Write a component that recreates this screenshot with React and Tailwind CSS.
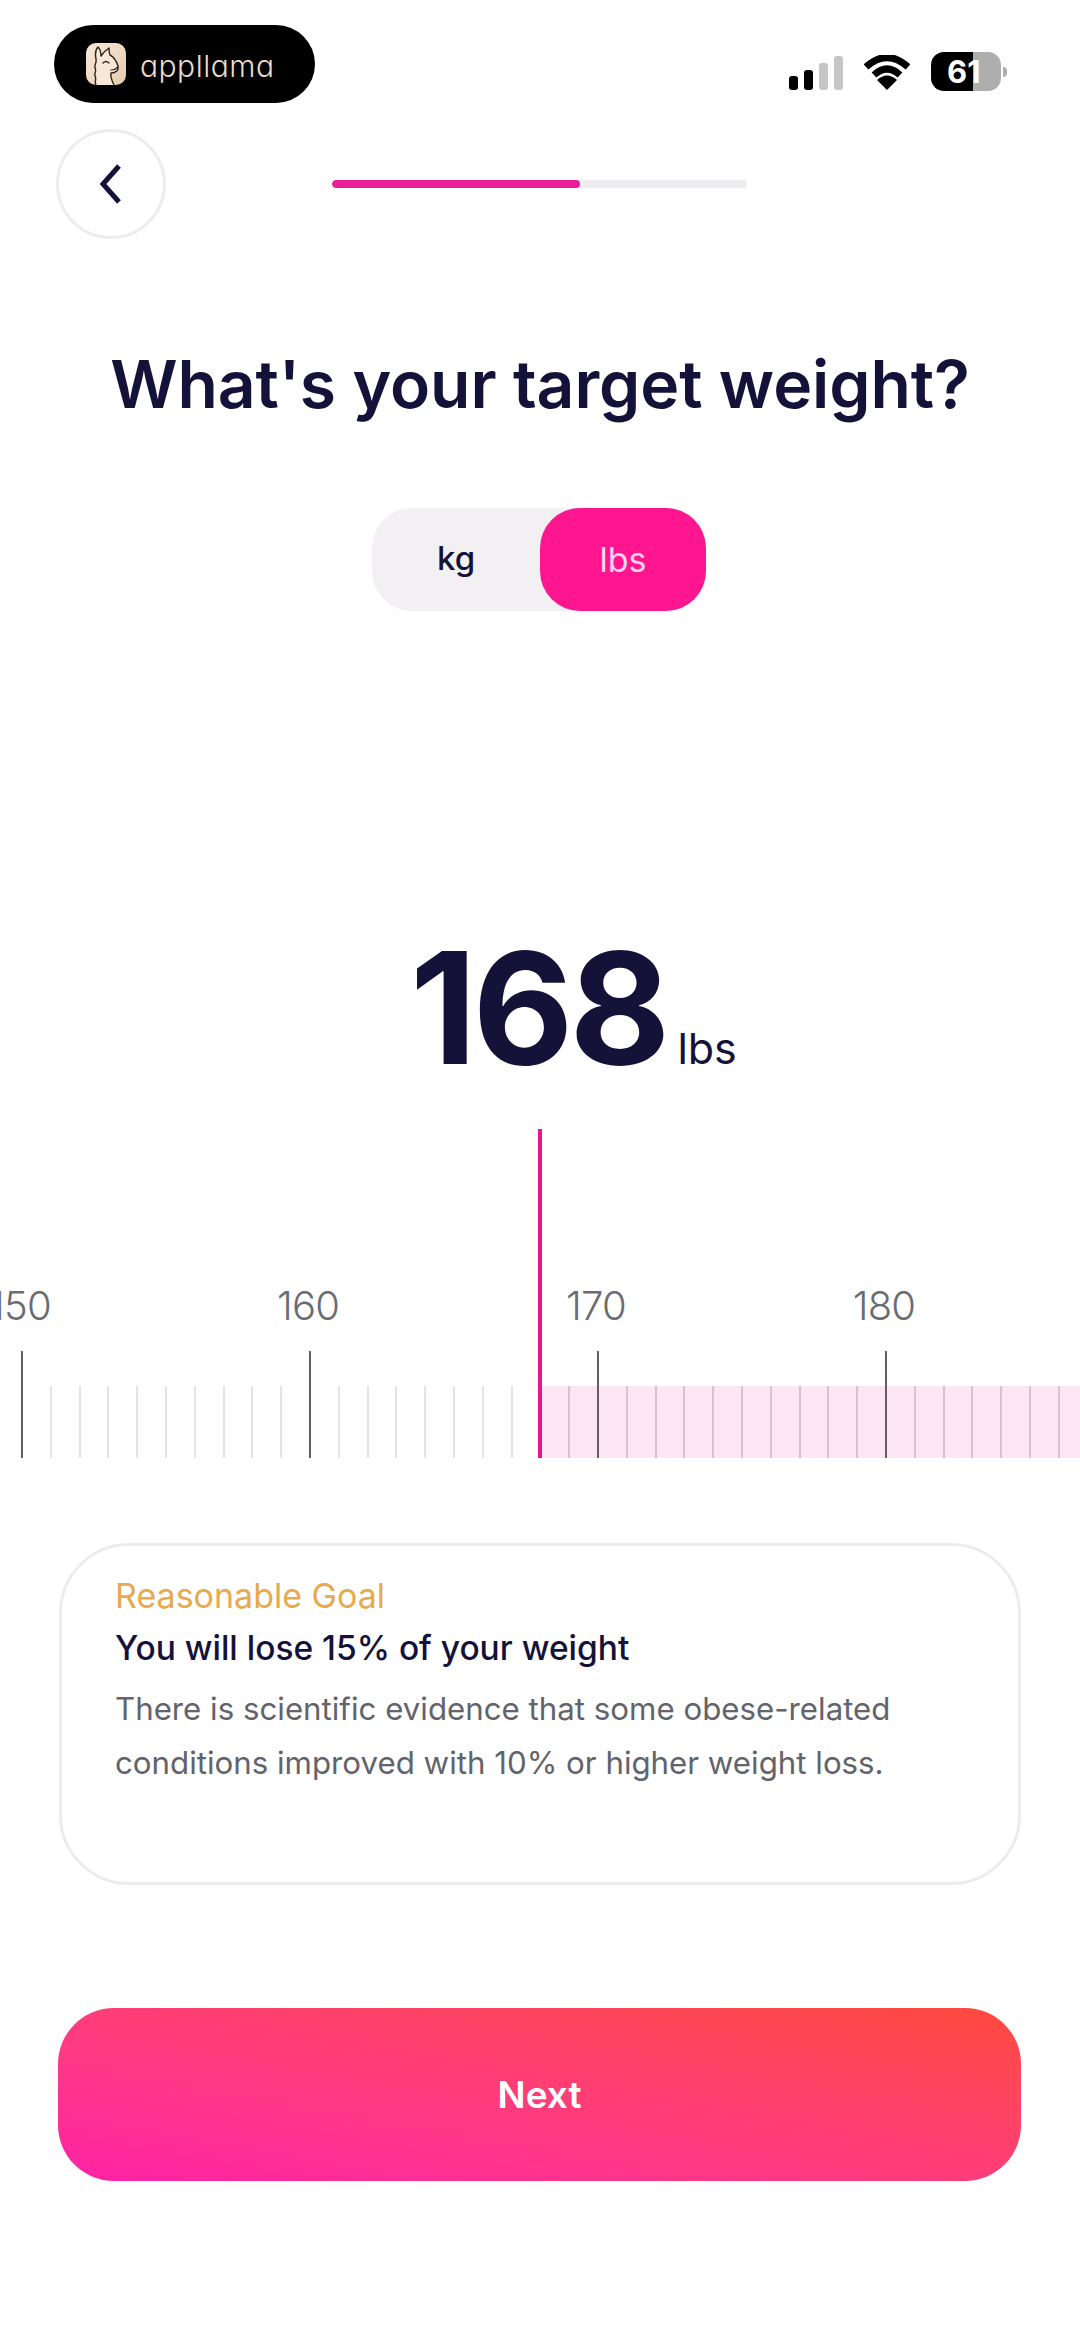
const dark = "text-[#15123a]";

function AppPill() {
  return (
    <div className="w-[261px] h-[78px] bg-black rounded-[39px] flex items-center pl-[32px]">
      <svg width="40" height="42" viewBox="0 0 40 42" className="shrink-0">
        <defs>
          <linearGradient id="tile" x1="0" y1="0" x2="1" y2="1">
            <stop offset="0" stopColor="#f8e8d8" />
            <stop offset="1" stopColor="#e6cbae" />
          </linearGradient>
        </defs>
        <rect width="40" height="42" rx="10" fill="url(#tile)" />
        <path
          d="M10 42 C8 38 11 36 9 33 C8 30 11 28 9 25 C8 22 11 20 10 16 C9 11 10 6 12 4 C14 6 15 10 15 13 C17 10 20 7 23 5 C23 8 23 10 24 12 C28 14 30 17 32 23 C33 27 30 30 25 30 C24 34 26 38 28 42"
          fill="#f6e7d6"
          stroke="#2b241d"
          strokeWidth="1.4"
          strokeLinejoin="round"
        />
        <path d="M17 20 Q20 17 23 20" fill="none" stroke="#2b241d" strokeWidth="1.4" strokeLinecap="round" />
        <path d="M25 27 Q29 27 32 24" fill="none" stroke="#2b241d" strokeWidth="1.2" strokeLinecap="round" />
      </svg>
      <span className="ml-[14px] font-light text-[30px] leading-none tracking-[0.5px] text-[#e8dccd] mt-[3px] [font-feature-settings:'cv11']">
        appllama
      </span>
    </div>
  );
}

function StatusIcons() {
  return (
    <div className="flex items-center mt-[27px]">
      <div className="flex items-end gap-[6px] h-[34px] mt-[2px]">
        <div className="w-[9px] h-[14px] rounded-[3px] bg-black" />
        <div className="w-[9px] h-[20px] rounded-[3px] bg-black" />
        <div className="w-[9px] h-[27px] rounded-[3px] bg-[#c6c6c6]" />
        <div className="w-[9px] h-[34px] rounded-[3px] bg-[#c6c6c6]" />
      </div>
      <svg width="46" height="36" viewBox="0 0 46 36" className="ml-[21px] mt-[2px]">
        <path d="M2 12 Q23 -7 44 12" fill="none" stroke="#000" strokeWidth="7" />
        <path d="M10 20 Q23 8 36 20" fill="none" stroke="#000" strokeWidth="7" />
        <path d="M13 25 Q23 16 33 25 L23 35 Z" fill="#000" />
      </svg>
      <div className="relative ml-[21px] flex items-center">
        <div className="w-[70px] h-[39px] rounded-[13px] overflow-hidden flex">
          <div className="w-[42px] bg-black" />
          <div className="flex-1 bg-[#aeaeae]" />
        </div>
        <div className="w-[4px] h-[10px] ml-[2px] rounded-r-full bg-[#aeaeae]" />
        <span className="absolute left-[16px] top-[1px] font-bold text-[31px] leading-[37px] text-white">
          61
        </span>
      </div>
    </div>
  );
}

function Ruler() {
  // 10 minor steps per major tick, 28.8px apart
  const ticks = Array.from({ length: 37 }, (_, i) => i);
  const labels = [150, 160, 170, 180];
  return (
    <div className="relative h-[329px] mt-[51px] overflow-hidden flex flex-col justify-end">
      <div className="flex ml-[-124px] mb-[22px] text-[40px] leading-[46px] text-[#6b6b72] font-light tracking-[-0.8px]">
        {labels.map((n) => (
          <div key={n} className="w-[288px] shrink-0 flex justify-center">
            {n}
          </div>
        ))}
      </div>
      <div className="relative flex items-end h-[107px] pl-[21px]">
        <div className="absolute left-[540px] right-0 bottom-0 h-[72px] bg-[#fde6f3]" />
        {ticks.map((i) => (
          <div key={i} className="relative w-[28.8px] shrink-0 h-full flex items-end">
            {i % 10 === 0 ? (
              <div className="w-[2px] h-[107px] bg-[#5f5f64]" />
            ) : (
              <div className={i > 18 ? "w-[2px] h-[72px] bg-[#dcbfd0]" : "w-[2px] h-[72px] bg-[#e4e4e6]"} />
            )}
          </div>
        ))}
      </div>
      <div className="absolute left-[538px] top-0 bottom-0 w-[4px] bg-[#e5168f]" />
    </div>
  );
}

export default function App() {
  return (
    <div className={`w-[1080px] h-[2336px] bg-white overflow-hidden font-['Inter',sans-serif] ${dark}`}>
      <div className="flex justify-between items-start pt-[25px] pl-[54px] pr-[73px]">
        <AppPill />
        <StatusIcons />
      </div>

      <div className="flex items-center pl-[56px] mt-[26px]">
        <button className="w-[110px] h-[110px] rounded-full border-[3px] border-[#ededee] flex items-center justify-center">
          <svg width="24" height="40" viewBox="0 0 24 40">
            <path d="M20 2 L4 20 L20 38" fill="none" stroke="#15123a" strokeWidth="5" />
          </svg>
        </button>
        <div className="ml-[166px] w-[415px] h-[8px] rounded-full bg-[#eeeef0] overflow-hidden">
          <div className="w-[248px] h-full rounded-full bg-[#e91e98]" />
        </div>
      </div>

      <h1 className="mt-[105px] text-center text-[66px] leading-[80px] font-semibold tracking-[-0.1px]">
        What's your target weight?
      </h1>

      <div className="mt-[84px] ml-[372px] w-[334px] h-[103px] rounded-[40px] bg-[#f2f0f2] flex">
        <div className="w-[168px] flex items-center justify-center text-[33px] font-medium pb-[2px]">kg</div>
        <div className="w-[166px] rounded-[40px] bg-[#fe1690] flex items-center justify-center text-[34px] text-[#ffd3ec]">
          lbs
        </div>
      </div>

      <div className="mt-[327px] pl-[410px] flex items-baseline h-[140px]">
        <span className="text-[155px] leading-[140px] font-bold tracking-[-4px]">168</span>
        <span className="ml-[11px] text-[43px] leading-none">lbs</span>
      </div>

      <Ruler />

      <div className="mt-[85px] mx-[59px] h-[342px] rounded-[70px] border-[3px] border-[#ececec] pl-[53px] pt-[27px]">
        <div className="text-[34px] leading-[46px] text-[#e8a94f]">Reasonable Goal</div>
        <div className="mt-[6px] text-[33.5px] leading-[46px] font-medium">You will lose 15% of your weight</div>
        <p className="mt-[11px] text-[31.25px] leading-[54px] text-[#62636b]">
          There is scientific evidence that some obese-related
          <br />
          conditions improved with 10% or higher weight loss.
        </p>
      </div>

      <button className="mt-[123px] ml-[58px] w-[963px] h-[173px] rounded-[56px] bg-linear-to-tr from-[#ff20a6] to-[#ff4a3a] text-white text-[37px] font-semibold flex items-center justify-center">
        Next
      </button>
    </div>
  );
}
